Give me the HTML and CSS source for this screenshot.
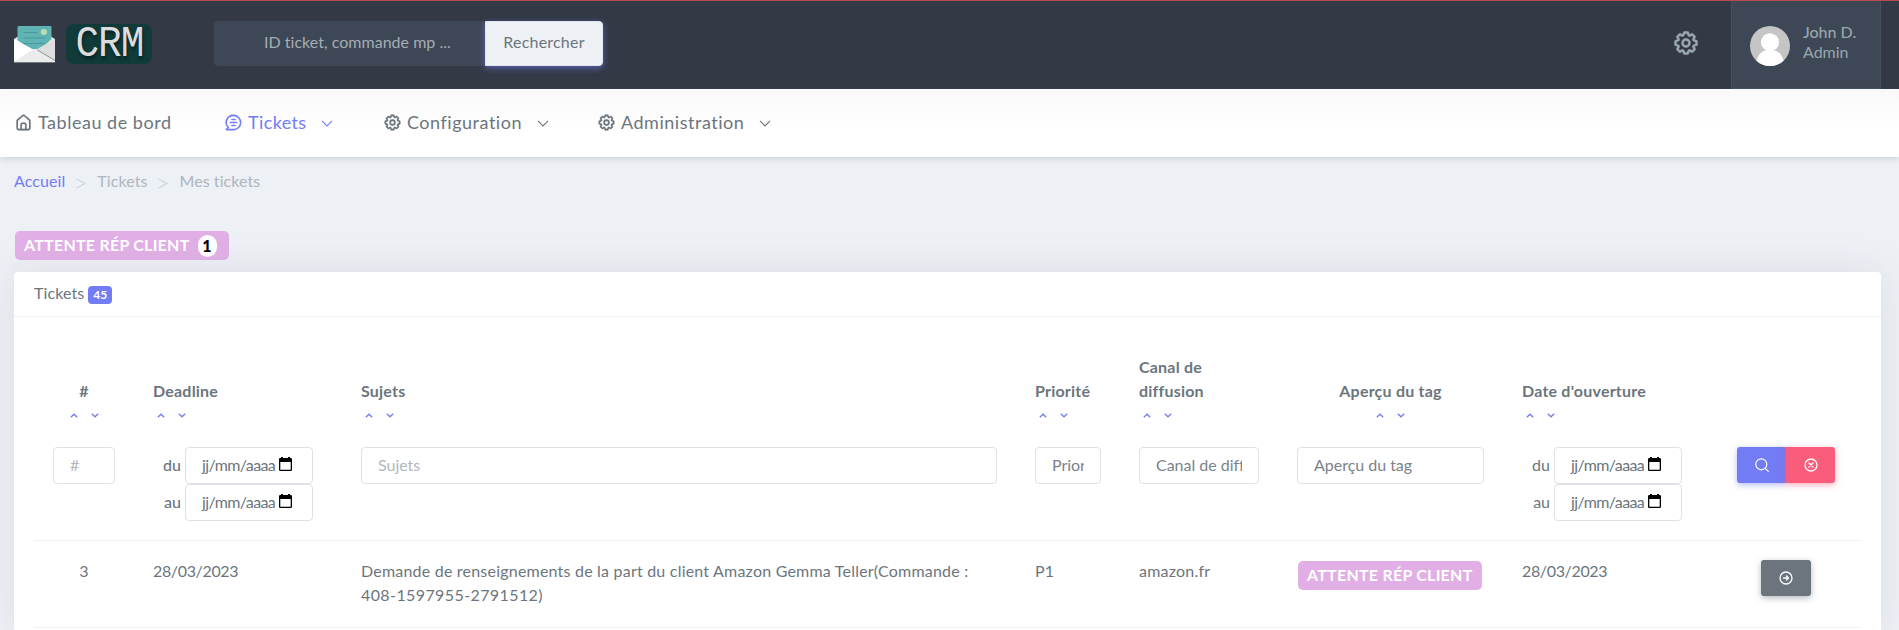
FILE: index.html
```html
<!DOCTYPE html>
<html lang="fr">
<head>
<meta charset="utf-8">
<title>CRM - Mes tickets</title>
<link rel="stylesheet" href="styles.css">
</head>
<body>
<svg class="defs" width="0" height="0" aria-hidden="true">
  <symbol id="cog" viewBox="0 0 24 24"><path d="M21.32,9.55l-1.89-.63.89-1.78A1,1,0,0,0,20.13,6L18,3.87a1,1,0,0,0-1.15-.19l-1.78.89-.63-1.89A1,1,0,0,0,13.5,2h-3a1,1,0,0,0-.95.68L8.92,4.57,7.14,3.68A1,1,0,0,0,6,3.87L3.87,6a1,1,0,0,0-.19,1.15l.89,1.78-1.89.63A1,1,0,0,0,2,10.5v3a1,1,0,0,0,.68.95l1.89.63-.89,1.78A1,1,0,0,0,3.87,18L6,20.13a1,1,0,0,0,1.15.19l1.78-.89.63,1.89a1,1,0,0,0,.95.68h3a1,1,0,0,0,.95-.68l.63-1.89,1.78.89A1,1,0,0,0,18,20.13L20.13,18a1,1,0,0,0,.19-1.15l-.89-1.78,1.89-.63A1,1,0,0,0,22,13.5v-3A1,1,0,0,0,21.32,9.55ZM20,12.78l-1.2.4A2,2,0,0,0,17.64,16l.57,1.14-1.1,1.1L16,17.64a2,2,0,0,0-2.79,1.16l-.4,1.2H11.22l-.4-1.2A2,2,0,0,0,8,17.64l-1.14.57-1.1-1.1L6.36,16A2,2,0,0,0,5.2,13.18L4,12.78V11.22l1.2-.4A2,2,0,0,0,6.36,8L5.79,6.89l1.1-1.1L8,6.36A2,2,0,0,0,10.82,5.2l.4-1.2h1.56l.4,1.2A2,2,0,0,0,16,6.36l1.14-.57,1.1,1.1L17.64,8a2,2,0,0,0,1.16,2.79l1.2.4ZM12,8a4,4,0,1,0,4,4A4,4,0,0,0,12,8Zm0,6a2,2,0,1,1,2-2A2,2,0,0,1,12,14Z"/></symbol>
  <symbol id="down" viewBox="0 0 12 7"><path d="M1 .8 6 6 11 .8" fill="none" stroke="currentColor" stroke-width="1.1"/></symbol>
  <symbol id="sort-up" viewBox="0 0 8 5"><path d="M.8 4.3 4 1.2 7.2 4.3" fill="none" stroke="currentColor" stroke-width="1.3"/></symbol>
  <symbol id="sort-down" viewBox="0 0 8 5"><path d="M.8.7 4 3.8 7.2.7" fill="none" stroke="currentColor" stroke-width="1.3"/></symbol>
  <symbol id="calendar" viewBox="0 0 13 15"><path fill-rule="evenodd" d="M2 0h2v1h5V0h2v1h.8Q13 1 13 2.3v10.4Q13 14 11.700 14H1.300Q0 14 0 12.700V2.300Q0 1 1.300 1H2ZM1.300 5v7.700h10.400V5Z"/></symbol>
</svg>

<header class="topbar">
  <a class="logo">
    <svg class="logo-mail" viewBox="0 0 35 37" preserveAspectRatio="none">
      <path fill="#e8e8e8" d="M0 13 4 10h27l4 3v24H0Z"/>
      <path fill="#5fb3b3" d="M3 1.200Q3 0 4.200 0h26.600Q32 0 32 1.200V13L23 23H12L3 14Z"/>
      <path d="M8 6.500h12M8 12h19M8 17.500h18" stroke="#49999b"/>
      <ellipse cx="25.500" cy="6" rx="2.700" ry="3" fill="#b9dcb4"/>
      <path fill="#fff" d="M0 13 16.500 23.500 0 36Z"/>
      <path fill="#dedede" d="M35 13 19 23.500 35 34Z"/>
      <path fill="#ececec" d="M0 36.300 14.500 24.500Q17.500 22.500 20.500 24.500L35 35v1.300Z"/>
      <path d="M20 24 35 34.500" stroke="#777" stroke-width=".7"/>
      <path d="M0 36.600h35" stroke="#75797c"/>
    </svg>
    <span class="logo-text"><span class="logo-word">CRM</span></span>
  </a>
  <form class="search">
    <input class="search-input" type="text" placeholder="ID ticket, commande mp ...">
    <button class="search-btn" type="button">Rechercher</button>
  </form>
  <svg class="top-gear" viewBox="0 0 24 24"><use href="#cog"/></svg>
  <div class="user">
    <svg class="avatar" viewBox="0 0 40 40"><defs><clipPath id="round"><circle cx="20" cy="20" r="20"/></clipPath></defs><g clip-path="url(#round)"><path fill="#c5c5c5" d="M0 0h40v40H0z"/><circle cx="20" cy="16.200" r="9" fill="#fff"/><path fill="#fff" d="M5.500 40Q7.500 25 17 24h6q9.500 1 11.500 16Z"/></g></svg>
    <div class="user-text"><span class="user-name">John D.</span><span class="user-role">Admin</span></div>
  </div>
</header>

<nav class="mainnav">
  <a class="nav-item nav-home"><svg class="ico" viewBox="0 0 24 24"><path d="M20,8h0L14,2.740a3,3,0,0,0-4,0L4,8a3,3,0,0,0-1,2.260V19a3,3,0,0,0,3,3H18a3,3,0,0,0,3-3V10.250A3,3,0,0,0,20,8ZM14,20H10V15a1,1,0,0,1,1-1h2a1,1,0,0,1,1,1Zm5-1a1,1,0,0,1-1,1H16V15a3,3,0,0,0-3-3H11a3,3,0,0,0-3,3v5H6a1,1,0,0,1-1-1V10.250a1,1,0,0,1,.34-.75l6-5.250a1,1,0,0,1,1.320,0l6,5.250a1,1,0,0,1,.34.75Z"/></svg><span>Tableau de bord</span></a>
  <a class="nav-item nav-tickets"><svg class="ico" viewBox="0 0 24 24"><g fill="none" stroke="currentColor" stroke-width="2" stroke-linecap="round" stroke-linejoin="round"><path d="M12 3a9 9 0 1 1 0 18H3l2.300-2.800A9 9 0 0 1 12 3Z"/><path d="M10 8.200h4M8 12h8M10 15.800h4"/></g></svg><span>Tickets</span><svg class="chev"><use href="#down"/></svg></a>
  <a class="nav-item nav-config"><svg class="ico"><use href="#cog"/></svg><span>Configuration</span><svg class="chev"><use href="#down"/></svg></a>
  <a class="nav-item nav-admin"><svg class="ico"><use href="#cog"/></svg><span>Administration</span><svg class="chev"><use href="#down"/></svg></a>
</nav>

<main class="content">
  <div class="breadcrumb"><a class="crumb-link">Accueil</a><svg class="sep" viewBox="0 0 10 11"><path d="M.5 1 9 5.500.5 10"/></svg><span>Tickets</span><svg class="sep" viewBox="0 0 10 11"><path d="M.5 1 9 5.500.5 10"/></svg><span>Mes tickets</span></div>
  <div class="tag tag-filter"><span class="tag-label">ATTENTE RÉP CLIENT</span><b class="tag-count">1</b></div>
  <section class="card">
    <div class="card-head"><span class="card-title">Tickets</span><b class="count">45</b></div>
    <table class="tickets">
      <colgroup><col class="w-id"><col class="w-date"><col class="w-subject"><col class="w-prio"><col class="w-canal"><col class="w-tag"><col class="w-date"><col class="w-act"></colgroup>
      <thead>
        <tr>
          <th class="center">#<div class="sort"><svg><use href="#sort-up"/></svg><svg><use href="#sort-down"/></svg></div></th>
          <th>Deadline<div class="sort"><svg><use href="#sort-up"/></svg><svg><use href="#sort-down"/></svg></div></th>
          <th>Sujets<div class="sort"><svg><use href="#sort-up"/></svg><svg><use href="#sort-down"/></svg></div></th>
          <th>Priorité<div class="sort"><svg><use href="#sort-up"/></svg><svg><use href="#sort-down"/></svg></div></th>
          <th>Canal de<br>diffusion<div class="sort"><svg><use href="#sort-up"/></svg><svg><use href="#sort-down"/></svg></div></th>
          <th class="center">Aperçu du tag<div class="sort"><svg><use href="#sort-up"/></svg><svg><use href="#sort-down"/></svg></div></th>
          <th>Date d'ouverture<div class="sort"><svg><use href="#sort-up"/></svg><svg><use href="#sort-down"/></svg></div></th>
          <th></th>
        </tr>
      </thead>
      <tbody>
        <tr class="filters">
          <td><input class="field light" type="text" placeholder="#"></td>
          <td><div class="dates strong"><span>du</span><div class="date">jj/mm/aaaa<svg class="cal"><use href="#calendar"/></svg></div><span>au</span><div class="date">jj/mm/aaaa<svg class="cal"><use href="#calendar"/></svg></div></div></td>
          <td><input class="field light" type="text" placeholder="Sujets"></td>
          <td><input class="field" type="text" placeholder="Priorité"></td>
          <td><input class="field" type="text" placeholder="Canal de diffusion"></td>
          <td><input class="field" type="text" placeholder="Aperçu du tag"></td>
          <td><div class="dates"><span>du</span><div class="date">jj/mm/aaaa<svg class="cal"><use href="#calendar"/></svg></div><span>au</span><div class="date">jj/mm/aaaa<svg class="cal"><use href="#calendar"/></svg></div></div></td>
          <td><div class="actions">
            <button class="btn btn-search" type="button"><svg viewBox="0 0 14 14"><g fill="none" stroke="currentColor" stroke-width="1.200" stroke-linecap="round"><circle cx="6.300" cy="6.300" r="5.500"/><path d="m10.300 10.300 3 3"/></g></svg></button><button class="btn btn-clear" type="button"><svg viewBox="0 0 14 14"><g fill="none" stroke="currentColor" stroke-width="1.300" stroke-linecap="round"><circle cx="7" cy="7" r="6"/><path d="m5 5 4 4M9 5 5 9"/></g></svg></button>
          </div></td>
        </tr>
        <tr class="row">
          <td class="center">3</td>
          <td class="day">28/03/2023</td>
          <td>Demande de renseignements de la part du client Amazon Gemma Teller(Commande :<br><span class="order">408-1597955-2791512)</span></td>
          <td>P1</td>
          <td>amazon.fr</td>
          <td><div class="tag tag-row"><span class="tag-label">ATTENTE RÉP CLIENT</span></div></td>
          <td class="day">28/03/2023</td>
          <td><div class="actions"><button class="btn btn-open" type="button"><svg viewBox="0 0 14 14"><g fill="none" stroke="currentColor" stroke-width="1.300" stroke-linecap="round" stroke-linejoin="round"><circle cx="7" cy="7" r="6"/><path d="M4.500 7h5M7.500 5l2 2-2 2"/></g></svg></button></div></td>
        </tr>
      </tbody>
    </table>
  </section>
</main>
</body>
</html>
```
FILE: styles.css
```css
* { box-sizing: border-box; }
body {
  display: flex;
  flex-direction: column;
  margin: 0;
  height: 630px;
  overflow: hidden;
  background: #edf0f5;
  color: #6c757d;
  font: 16px/24px Lato, "Noto Sans", sans-serif;
  letter-spacing: .21px;
}
input, button { font: inherit; letter-spacing: inherit; }
.defs { display: block; height: 0; flex: none; }

.topbar {
  display: flex;
  flex: none;
  align-items: flex-start;
  height: 89px;
  padding-left: 14px;
  border-top: 1px solid #b94a52;
  background: #333a46;
}
.logo { display: flex; align-items: flex-start; padding-top: 23px; width: 200px; }
.logo-mail { width: 41px; height: 37px; margin-top: 2px; }
.logo-text {
  display: flex;
  justify-content: center;
  width: 86px;
  height: 40px;
  margin-left: 11px;
  border-radius: 8px;
  background: #103b39;
  color: #dcdcde;
  font: 41px/40px "Liberation Mono", monospace;
  letter-spacing: -1px;
  text-shadow: 1px 3px 3px #0a2625;
}
.logo-word { transform: scale(.96, 1.06); }
.search { display: flex; width: 389px; height: 45px; margin-top: 20px; }
.search-input {
  width: 271px;
  padding: 0 0 3px 50px;
  border: 0;
  border-radius: 4px 0 0 4px;
  background: #3e4755;
  color: #98a6ad;
  letter-spacing: .02px;
}
.search-input::placeholder { color: #a5adb5; opacity: 1; }
.search-btn {
  flex: 1;
  height: 45px;
  padding: 0 0 3px;
  border: 1px solid #e2e7ee;
  border-radius: 0 4px 4px 0;
  background: #eef1f6;
  color: #6c757d;
  box-shadow: 0 2px 6px rgba(114, 124, 245, .6);
}
.top-gear { width: 28px; height: 28px; margin: 28px 0 0 auto; color: #98a6ad; fill: currentColor; stroke: currentColor; stroke-width: .2; }
.user {
  display: flex;
  width: 150px;
  height: 88px;
  margin: 0 18px 0 31px;
  padding: 25px 0 0 18px;
  border: 1px solid #434f62;
  border-top: 0;
  background: #3e4755;
  color: #98a6ad;
}
.avatar { width: 40px; height: 40px; }
.user-text { display: flex; flex-direction: column; margin: -4px 0 0 13px; line-height: 20px; letter-spacing: 0; }
.user-name { font-weight: 500; }

.mainnav {
  position: relative;
  display: flex;
  flex: none;
  height: 68px;
  padding-left: 14px;
  background: linear-gradient(#f8f8f8, #fff 60%);
  box-shadow: 0 2px 6px rgba(100, 110, 120, .22);
  font-size: 18px;
  letter-spacing: .52px;
}
.nav-item { display: flex; align-items: center; height: 68px; }
.nav-item span { margin-top: -2px; }
.nav-item svg { fill: currentColor; }
.ico { width: 19px; height: 19px; margin: -1px 5px 0 0; stroke: currentColor; stroke-width: .2; }
.chev { width: 12px; height: 7px; margin: 0 0 0 15px; }
.nav-home { width: 210px; }
.nav-tickets { width: 159px; color: #727cf5; letter-spacing: .38px; }
.nav-config { width: 214px; }

.content { flex: 1; min-height: 0; padding: 12px 18px 0 14px; display: flex; flex-direction: column; }
.breadcrumb { display: flex; height: 24px; flex: none; color: #adb5bd; letter-spacing: .08px; }
.crumb-link { color: #727cf5; }
.sep { width: 10px; height: 11px; margin: 9px 11px 0; fill: none; stroke: #cdd3d9; stroke-width: 1.1; }
.tag {
  display: flex;
  flex: none;
  align-items: center;
  height: 29px;
  border-radius: 5px;
  background: #e1afe6;
  color: #fff;
  font-weight: 700;
}
.tag-label { margin-top: -2px; letter-spacing: .25px; }
.tag-filter { width: 214px; margin: 38px 0 12px 1px; padding-left: 9px; }
.tag-count {
  width: 19px;
  height: 22px;
  margin-left: 8px;
  border-radius: 10px;
  background: #fff;
  color: #000;
  text-align: center;
  line-height: 21px;
}
.card {
  flex: 1;
  min-height: 0;
  border-radius: 4px 4px 0 0;
  background: #fff;
  box-shadow: 0 0 35px rgba(154, 161, 171, .22);
}
.card-head {
  display: flex;
  align-items: center;
  height: 45px;
  padding: 0 20px;
  border-bottom: 1px solid #eef2f7;
}
.card-title { margin-top: -2px; letter-spacing: .1px; }
.count {
  width: 24px;
  height: 18px;
  margin: 2px 0 0 4px;
  border-radius: 4px;
  background: #727cf5;
  color: #fff;
  text-align: center;
  font-size: 12px;
  line-height: 18px;
}
.tickets {
  width: 1827px;
  margin: 19px 20px 0;
  border-collapse: separate;
  border-spacing: 0;
  table-layout: fixed;
}
.w-id { width: 100px; }
.w-date { width: 208px; }
.w-subject { width: 674px; }
.w-prio { width: 104px; }
.w-canal { width: 158px; }
.w-tag { width: 225px; }
.w-act { width: 150px; }
.tickets th { padding: 19px 19px 0; text-align: left; vertical-align: bottom; font-weight: 700; }
.tickets td { padding: 20px 19px 19px; vertical-align: top; }
.tickets .center { text-align: center; }
.center .sort { justify-content: center; padding: 0; }
.sort { display: flex; align-items: center; gap: 13px; height: 24px; padding-left: 4px; color: #727cf5; }
.sort svg { width: 8px; height: 5px; margin-top: 1px; }
.field, .date { border: 1px solid #dee2e6; border-radius: 4px; background: #fff; height: 37px; }
.field { display: block; width: 100%; padding: 0 16px 2px; color: #6c757d; letter-spacing: -.02px; }
.field::placeholder { color: #7a838a; opacity: 1; }
.light::placeholder { color: #b0b7be; }
.dates { display: grid; grid-template-columns: 18px 128px; column-gap: 4px; padding-left: 10px; }
.dates span { line-height: 35px; text-align: right; letter-spacing: 0; }
.strong span { font-weight: 500; }
.date { display: flex; align-items: center; justify-content: space-between; padding: 0 20px 2px 16px; letter-spacing: -.6px; }
.cal { width: 13px; height: 15px; margin-top: -1px; fill: #000; }
.actions { display: flex; justify-content: center; }
.btn {
  display: flex;
  align-items: center;
  justify-content: center;
  width: 49px;
  height: 36px;
  padding: 0;
  border: 0;
  color: #fff;
}
.btn svg { width: 14px; height: 14px; }
.btn-search { border-radius: 3px 0 0 3px; background: #727cf5; box-shadow: 0 2px 6px rgba(114, 124, 245, .5); }
.btn-clear { border-radius: 0 3px 3px 0; background: #fa5c7c; box-shadow: 0 2px 6px rgba(250, 92, 124, .5); }
.btn-open { width: 50px; border-radius: 3px; background: #6c757d; box-shadow: 0 2px 6px rgba(108, 117, 125, .5); }
.row td { height: 88px; padding-top: 18px; border-top: 1px solid #eef0f4; border-bottom: 1px solid #eef0f4; }
.row .actions { margin-top: 1px; }
.day { letter-spacing: -.35px; }
.order { letter-spacing: .4px; }
.tag-row { width: 184px; margin: 2px 0 0 1px; padding-left: 9px; }
```
